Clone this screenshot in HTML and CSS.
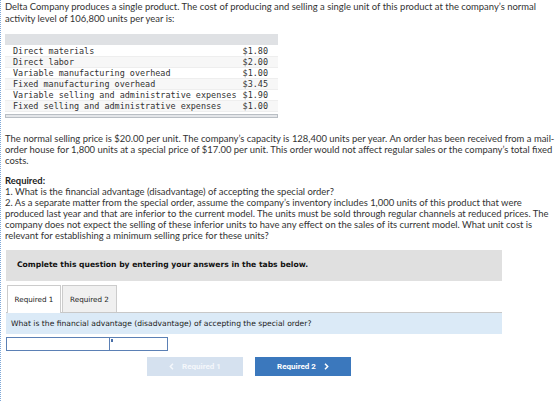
FILE: index.html
```html
<!DOCTYPE html>
<html lang="en">
<head>
<meta charset="utf-8">
<title>Delta Company – Special Order</title>
<link rel="stylesheet" href="styles.css">
</head>
<body>
<div class="page">
  <p class="intro">Delta Company produces a single product. The cost of producing and selling a single unit of this product at the company’s normal activity level of 106,800 units per year is:</p>

  <div class="cost-box">
    <div class="cost-head"></div>
    <table class="cost-table">
      <tr><td>Direct materials</td><td class="amt">$1.80</td></tr>
      <tr><td>Direct labor</td><td class="amt">$2.00</td></tr>
      <tr><td>Variable manufacturing overhead</td><td class="amt">$1.00</td></tr>
      <tr><td>Fixed manufacturing overhead</td><td class="amt">$3.45</td></tr>
      <tr><td>Variable selling and administrative expenses</td><td class="amt">$1.90</td></tr>
      <tr><td>Fixed selling and administrative expenses</td><td class="amt">$1.00</td></tr>
    </table>
    <div class="scroll-track"></div>
  </div>

  <p class="body-text">The normal selling price is $20.00 per unit. The company’s capacity is 128,400 units per year. An order has been received from a mail-order house for 1,800 units at a special price of $17.00 per unit. This order would not affect regular sales or the company’s total fixed costs.</p>

  <div class="required">
    <p class="req-title">Required:</p>
    <p>1. What is the financial advantage (disadvantage) of accepting the special order?</p>
    <p>2. As a separate matter from the special order, assume the company’s inventory includes 1,000 units of this product that were<br>produced last year and that are inferior to the current model. The units must be sold through regular channels at reduced prices. The company does not expect the selling of these inferior units to have any effect on the sales of its current model. What unit cost is relevant for establishing a minimum selling price for these units?</p>
  </div>

  <div class="instructions">Complete this question by entering your answers in the tabs below.</div>

  <div class="tabs">
    <div class="tab active">Required 1</div>
    <div class="tab">Required 2</div>
  </div>

  <div class="prompt">What is the financial advantage (disadvantage) of accepting the special order?</div>

  <div class="answer-row">
    <div class="field wide"></div>
    <div class="field narrow"><span class="marker"></span></div>
  </div>

  <div class="nav">
    <button class="nav-btn prev" disabled>
      <svg class="chev" width="5" height="7" viewBox="0 0 5 7"><polyline points="4,0.8 1.3,3.5 4,6.2" fill="none" stroke="currentColor" stroke-width="1.5"/></svg>
      Required 1
    </button>
    <button class="nav-btn next">
      Required 2
      <svg class="chev" width="5" height="7" viewBox="0 0 5 7"><polyline points="1,0.8 3.7,3.5 1,6.2" fill="none" stroke="currentColor" stroke-width="1.5"/></svg>
    </button>
  </div>
</div>
</body>
</html>
```

FILE: styles.css
```css
* { box-sizing: border-box; }

html, body {
  margin: 0;
  padding: 0;
  background: #fff;
}

.page {
  min-height: 401px;
  border-left: 1px dotted #7fa8d8;
  padding: 1px 0 0 4px;
  font-family: Lato, "Liberation Sans", sans-serif;
  font-size: 9.45px;
  line-height: 11px;
  color: #333;
}

p { margin: 0; }

.intro {
  width: 551px;
  line-height: 12px;
}

/* cost table */
.cost-box {
  width: 273px;
  margin-top: 9px;
}

.cost-head {
  height: 11px;
  background: #dfe1e4;
}

.cost-table {
  border-collapse: collapse;
  width: 100%;
  margin-top: 1px;
  font-family: "DejaVu Sans Mono", "Liberation Mono", monospace;
  font-size: 8.45px;
  line-height: 10px;
  color: #333;
}

.cost-table td {
  padding: 0;
  border-bottom: 1px solid #eeeeee;
  white-space: nowrap;
}

.cost-table td:first-child { padding-left: 8px; }

.cost-table tr:nth-child(even) td { background: #f7f7f7; }

.cost-table .amt {
  padding-left: 3px;
  padding-right: 10px;
  text-align: right;
}

.scroll-track {
  height: 4px;
  margin-top: 2px;
  border: 1px solid #b9bec4;
  background: #e4e6e9;
}

.body-text {
  width: 551px;
  margin-top: 15px;
}

.required {
  width: 551px;
  margin-top: 9px;
}

.req-title {
  font-weight: bold;
  color: #222;
}

/* answer panel */
.instructions {
  width: 496px;
  margin: 9px 0 0 1px;
  height: 31px;
  background: #e0e0e0;
  padding: 10px 0 0 11px;
  font-family: "DejaVu Sans", Verdana, sans-serif;
  font-size: 7.6px;
  line-height: 10px;
  font-weight: bold;
  color: #111;
}

.tabs {
  display: flex;
  margin: 4px 0 0 2px;
  height: 27px;
}

.tab {
  width: 55px;
  height: 27px;
  border: 1px solid #cccccc;
  border-bottom: none;
  background: #f0f0f0;
  font-family: "DejaVu Sans", Verdana, sans-serif;
  font-size: 7.2px;
  color: #222;
  display: flex;
  align-items: center;
  justify-content: center;
  margin-right: 1px;
}

.tab.active {
  background: #fff;
  width: 54px;
  height: 28px;
  position: relative;
  z-index: 1;
}

.prompt {
  width: 496px;
  margin-left: 1px;
  height: 22px;
  background: #dbeaf7;
  border-top: 1px solid #c8c8c8;
  padding: 6px 0 0 5px;
  font-family: "DejaVu Sans", Verdana, sans-serif;
  font-size: 7.6px;
  line-height: 9px;
  color: #222;
}

.answer-row {
  display: flex;
  margin: 3px 0 0 1px;
}

.field {
  height: 14px;
  border: 1px solid #5b80b5;
  background: #fff;
  position: relative;
}

.field.wide { width: 104px; }
.field.narrow { width: 58px; border-left: none; }

.marker {
  position: absolute;
  left: 1px;
  top: 1px;
  width: 2px;
  height: 3px;
  background: #4a6fa8;
}

.nav {
  display: flex;
  gap: 12px;
  margin: 6px 0 0 142px;
}

.nav-btn {
  width: 96px;
  height: 19px;
  border: none;
  padding: 0;
  font-family: Roboto, "Liberation Sans", sans-serif;
  font-size: 8px;
  font-weight: bold;
  color: #fff;
  display: flex;
  align-items: center;
  justify-content: center;
  gap: 8px;
}

.nav-btn.prev {
  background: #d5e1ef;
  color: #f4f7fb;
}

.nav-btn.next {
  background: #3b78bd;
}
```
